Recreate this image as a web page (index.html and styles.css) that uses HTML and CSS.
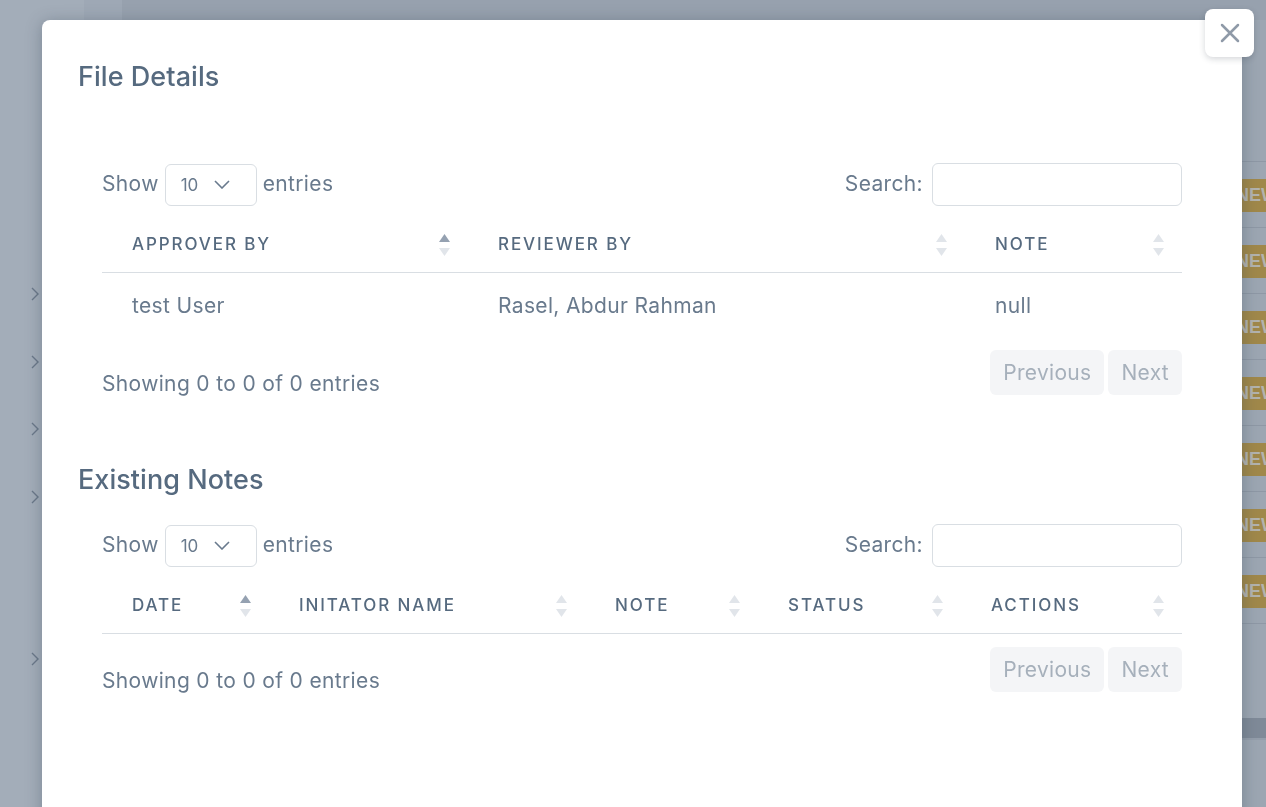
FILE: index.html
```html
<!DOCTYPE html>
<html lang="en">
<head>
<meta charset="utf-8">
<title>File Details</title>
<link rel="stylesheet" href="styles.css">
</head>
<body>
<div class="page">
  <aside class="sidebar">
    <div class="menu-item"><svg class="chev" viewBox="0 0 8 14" width="8" height="14"><polyline points="1,1 7,7 1,13"/></svg></div>
    <div class="menu-item"><svg class="chev" viewBox="0 0 8 14" width="8" height="14"><polyline points="1,1 7,7 1,13"/></svg></div>
    <div class="menu-item"><svg class="chev" viewBox="0 0 8 14" width="8" height="14"><polyline points="1,1 7,7 1,13"/></svg></div>
    <div class="menu-item"><svg class="chev" viewBox="0 0 8 14" width="8" height="14"><polyline points="1,1 7,7 1,13"/></svg></div>
    <div class="menu-item menu-gap"><svg class="chev" viewBox="0 0 8 14" width="8" height="14"><polyline points="1,1 7,7 1,13"/></svg></div>
  </aside>
  <div class="rail"></div>
  <main class="content">
    <div class="bg-head"></div>
    <div class="bg-row"><span class="badge">NEW</span></div>
    <div class="bg-row"><span class="badge">NEW</span></div>
    <div class="bg-row"><span class="badge">NEW</span></div>
    <div class="bg-row"><span class="badge">NEW</span></div>
    <div class="bg-row"><span class="badge">NEW</span></div>
    <div class="bg-row"><span class="badge">NEW</span></div>
    <div class="bg-row"><span class="badge">NEW</span></div>
    <div class="bg-bar"></div>
  </main>
</div>

<div class="modal">
  <button class="close" type="button" aria-label="Close">
    <svg viewBox="0 0 20 20" width="20" height="20"><path d="M2 2 L18 18 M18 2 L2 18"/></svg>
  </button>

  <h5 class="modal-title">File Details</h5>
  <section class="dt">
    <div class="dt-top">
      <label class="length">Show
        <span class="select"><span>10</span><svg viewBox="0 0 16 9" width="16" height="9"><polyline points="1,1 8,8 15,1"/></svg></span>
        entries</label>
      <label class="search">Search: <span class="input"></span></label>
    </div>
    <table class="table t1">
      <colgroup><col class="c366"><col class="c497"><col class="c217"></colgroup>
      <thead>
        <tr>
          <th><div class="th"><span>Approver By</span><svg class="sort asc" viewBox="0 0 11 22" width="11" height="22"><polygon class="up" points="0,8 5.5,0 11,8"/><polygon class="dn" points="0,14 11,14 5.5,22"/></svg></div></th>
          <th><div class="th"><span>Reviewer By</span><svg class="sort" viewBox="0 0 11 22" width="11" height="22"><polygon class="up" points="0,8 5.5,0 11,8"/><polygon class="dn" points="0,14 11,14 5.5,22"/></svg></div></th>
          <th><div class="th"><span>Note</span><svg class="sort" viewBox="0 0 11 22" width="11" height="22"><polygon class="up" points="0,8 5.5,0 11,8"/><polygon class="dn" points="0,14 11,14 5.5,22"/></svg></div></th>
        </tr>
      </thead>
      <tbody>
        <tr><td>test User</td><td>Rasel, Abdur Rahman</td><td>null</td></tr>
      </tbody>
    </table>
    <div class="dt-bottom">
      <div class="info">Showing 0 to 0 of 0 entries</div>
      <div class="pager"><span class="page-btn">Previous</span><span class="page-btn">Next</span></div>
    </div>
  </section>

  <h5 class="modal-title section-title">Existing Notes</h5>
  <section class="dt dt2">
    <div class="dt-top">
      <label class="length">Show
        <span class="select"><span>10</span><svg viewBox="0 0 16 9" width="16" height="9"><polyline points="1,1 8,8 15,1"/></svg></span>
        entries</label>
      <label class="search">Search: <span class="input"></span></label>
    </div>
    <table class="table t2">
      <colgroup><col class="c167"><col class="c316"><col class="c173"><col class="c203"><col class="c221"></colgroup>
      <thead>
        <tr>
          <th><div class="th"><span>Date</span><svg class="sort asc" viewBox="0 0 11 22" width="11" height="22"><polygon class="up" points="0,8 5.5,0 11,8"/><polygon class="dn" points="0,14 11,14 5.5,22"/></svg></div></th>
          <th><div class="th"><span>Initator Name</span><svg class="sort" viewBox="0 0 11 22" width="11" height="22"><polygon class="up" points="0,8 5.5,0 11,8"/><polygon class="dn" points="0,14 11,14 5.5,22"/></svg></div></th>
          <th><div class="th"><span>Note</span><svg class="sort" viewBox="0 0 11 22" width="11" height="22"><polygon class="up" points="0,8 5.5,0 11,8"/><polygon class="dn" points="0,14 11,14 5.5,22"/></svg></div></th>
          <th><div class="th"><span>Status</span><svg class="sort" viewBox="0 0 11 22" width="11" height="22"><polygon class="up" points="0,8 5.5,0 11,8"/><polygon class="dn" points="0,14 11,14 5.5,22"/></svg></div></th>
          <th><div class="th"><span>Actions</span><svg class="sort" viewBox="0 0 11 22" width="11" height="22"><polygon class="up" points="0,8 5.5,0 11,8"/><polygon class="dn" points="0,14 11,14 5.5,22"/></svg></div></th>
        </tr>
      </thead>
      <tbody></tbody>
    </table>
    <div class="dt-bottom">
      <div class="info">Showing 0 to 0 of 0 entries</div>
      <div class="pager"><span class="page-btn">Previous</span><span class="page-btn">Next</span></div>
    </div>
  </section>
</div>
</body>
</html>
```

FILE: styles.css
```css
* { box-sizing: border-box; }
html, body { margin: 0; padding: 0; }
body {
  width: 1266px;
  height: 807px;
  overflow: hidden;
  font-family: Inter, "Noto Sans", "Liberation Sans", sans-serif;
  color: #697a8d;
  background: #9ba5b2;
}

/* ---------- dimmed page behind the modal ---------- */
.page { display: flex; height: 807px; }
.sidebar {
  width: 84px;
  flex: none;
  background: #a3adb9;
  display: flex;
  flex-direction: column;
  padding: 285px 0 0 31px;
}
.menu-item { height: 67.5px; }
.menu-gap { margin-top: 95px; }
.chev { fill: none; stroke: #6b7889; stroke-width: 1.4; }
.rail { width: 38px; flex: none; background: #9ea8b5; }
.content { flex: 1; display: flex; flex-direction: column; background: #9ca6b2; }
.bg-head { height: 162px; flex: none; border-bottom: 1px solid #8e98a5; background: linear-gradient(#97a1ae 0 20px, #9ca6b2 20px); }
.bg-row {
  height: 66px;
  flex: none;
  border-bottom: 1px solid #8e98a5;
  display: flex;
  justify-content: flex-end;
  align-items: flex-start;
  padding-top: 17px;
}
.badge {
  width: 40px;
  height: 33px;
  margin-right: -8px;
  background: #a0884a;
  color: #b3b3ae;
  font: 700 18px/33px "Liberation Sans", sans-serif;
  padding-left: 2px;
  white-space: nowrap;
  overflow: hidden;
}
.bg-bar { height: 22px; margin-top: 94px; background: #7f8a98; border-bottom: 2px solid #949eab; flex: none; }

/* ---------- modal ---------- */
.modal {
  position: fixed;
  left: 42px;
  top: 20px;
  width: 1200px;
  height: 820px;
  background: #fff;
  border-radius: 8px;
  box-shadow: 0 2px 16px rgba(50, 62, 80, 0.35);
  padding: 41px 36px 0;
}
.close {
  position: absolute;
  left: 1163px;
  top: -11px;
  width: 49px;
  height: 48px;
  border: 0;
  border-radius: 8px;
  background: #fff;
  box-shadow: 0 2px 6px rgba(40, 50, 65, 0.2);
  display: flex;
  align-items: center;
  justify-content: center;
  padding: 0;
}
.close svg { fill: none; stroke: #8f9aa8; stroke-width: 2.5; stroke-linecap: round; }

.modal-title {
  margin: 0;
  font-size: 27px;
  line-height: 32px;
  font-weight: 500;
  color: #566a7f;
  letter-spacing: 0.05px;
}
.section-title { margin-top: 68px; }
.dt2 .dt-top { margin-top: 28px; }

.dt { margin: 0 24px; }
.dt-top {
  margin-top: 70px;
  height: 43px;
  display: flex;
  justify-content: space-between;
  align-items: center;
  font-size: 21px;
  letter-spacing: 0.35px;
}
.length, .search { display: flex; align-items: center; padding-bottom: 3px; }
.select {
  width: 92px;
  height: 42px;
  margin: 3px 6px 0;
  border: 1px solid #d9dee3;
  border-radius: 6px;
  display: flex;
  align-items: center;
  justify-content: space-between;
  padding: 0 26px 0 15px;
  font-size: 17px;
  letter-spacing: 0;
  color: #697a8d;
}
.select svg { fill: none; stroke: #697a8d; stroke-width: 1.6; }
.input {
  display: block;
  width: 250px;
  height: 43px;
  margin: 3px 0 0 9px;
  border: 1px solid #d9dee3;
  border-radius: 6px;
}

.table {
  width: 100%;
  margin-top: 8px;
  border-collapse: collapse;
  table-layout: fixed;
}
.c366 { width: 366px; } .c497 { width: 497px; } .c217 { width: 217px; }
.c167 { width: 167px; } .c316 { width: 316px; } .c173 { width: 173px; } .c203 { width: 203px; } .c221 { width: 221px; }
.table th {
  padding: 18px 18px 16px 30px;
  border-bottom: 1px solid #d9dee3;
  text-align: left;
  font-size: 17px;
  line-height: 24px;
  font-weight: 500;
  letter-spacing: 1.9px;
  text-transform: uppercase;
  color: #566a7f;
  white-space: nowrap;
}
.th { display: flex; align-items: center; justify-content: space-between; }
.sort { flex: none; margin-top: 1px; }
.sort .up, .sort .dn { fill: #e1e5ea; }
.sort.asc .up { fill: #95a1b1; }
.table td {
  padding: 21px 30px 19px;
  font-size: 21px;
  line-height: 24px;
  letter-spacing: 0.35px;
  color: #697a8d;
}

.dt-bottom {
  margin-top: 13px;
  display: flex;
  justify-content: space-between;
  align-items: flex-start;
}
.info { padding-top: 22px; font-size: 21px; line-height: 24px; letter-spacing: 0.35px; }
.pager { display: flex; gap: 4px; }
.page-btn {
  height: 45px;
  padding: 0 13px;
  border-radius: 6px;
  background: #f4f5f7;
  color: #a6b0bb;
  font-size: 21px;
  letter-spacing: 0.3px;
  line-height: 45px;
}
```
